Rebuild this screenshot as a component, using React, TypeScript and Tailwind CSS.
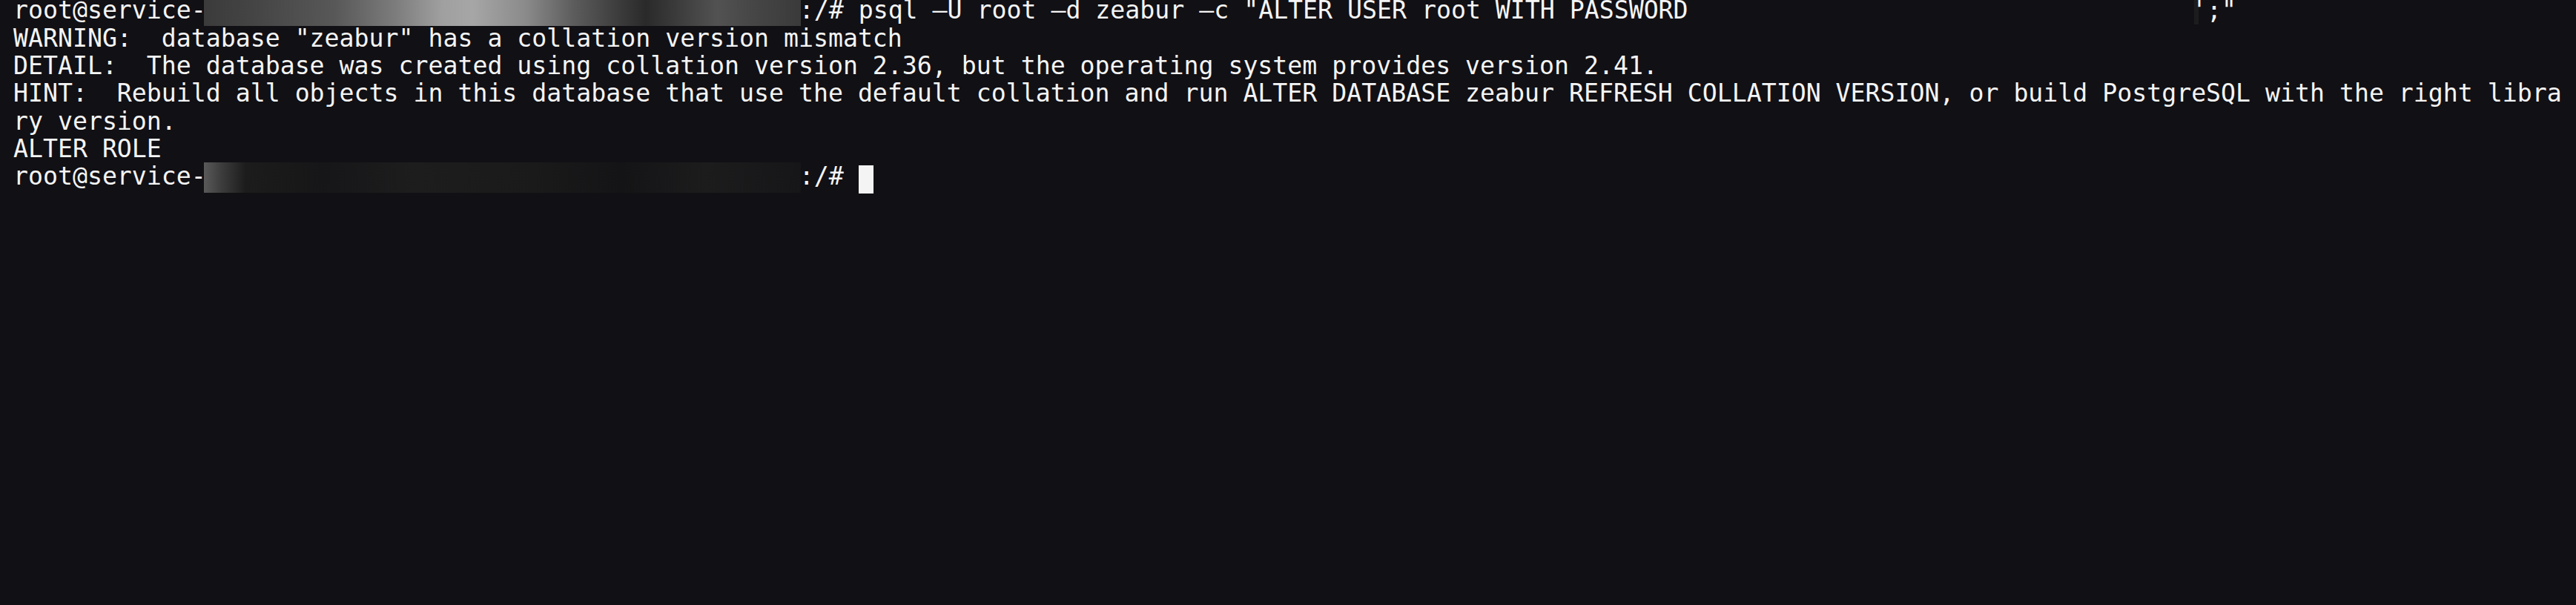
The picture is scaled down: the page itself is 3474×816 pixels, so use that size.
const HINT_A =
  'HINT:  Rebuild all objects in this database that use the default collation and run ALTER DATABASE zeabur REFRESH COLLATION VERSION, or build PostgreSQL with the right libra';
const HINT_B = 'ry version.';

function Line({ children }: { children?: React.ReactNode }) {
  return <div className="h-[37.3px] whitespace-pre">{children}</div>;
}

export default function App() {
  return (
    <div className="h-[816px] w-full overflow-hidden bg-[#111014] text-[#f4f4f4]">
      <div className="pl-[18px] font-['DejaVu_Sans_Mono','Liberation_Mono',monospace] text-[33.2px] leading-[37.3px]">
        {/* first row is cut by the screenshot, so it sits a little higher */}
        <div className="flex h-[32.9px] items-start whitespace-pre leading-[28.4px]">
          <span>root@service-</span>
          <span className="-ml-[3px] -mr-[2px] inline-block h-[35px] w-[805px] bg-[linear-gradient(90deg,#3b3b3b_0%,#444444_8%,#585858_22%,#7c7c7c_32%,#a0a0a0_40%,#a6a6a6_45%,#8a8a8a_54%,#5c5c5c_62%,#3a3a3a_70%,#2a2a2a_74%,#3e3e3e_80%,#525252_86%,#464646_92%,#3a3a3a_100%)]" />
          <span>{':/# psql –U root –d zeabur –c "ALTER USER root WITH PASSWORD ' + ' '.repeat(33)}</span>
          <span className="inline-block h-[33px] w-[20px] bg-[linear-gradient(90deg,transparent_3px,#1c1c1f_3px,#1c1c1f_9px,transparent_9px)]">
            '
          </span>
          <span>{';"'}</span>
        </div>
        <Line>WARNING:  database "zeabur" has a collation version mismatch</Line>
        <Line>
          DETAIL:  The database was created using collation version 2.36, but the operating system provides
          version 2.41.
        </Line>
        <Line>{HINT_A}</Line>
        <Line>{HINT_B}</Line>
        <Line>ALTER ROLE</Line>
        <Line>
          <div className="flex items-start">
            <span>root@service-</span>
            <span className="-ml-[3px] -mr-[2px] inline-block h-[41px] w-[805px] bg-[linear-gradient(90deg,#5a5a5a_0%,#3c3c3c_3%,#1c1c1c_7%,#161618_20%,#1d1d1e_35%,#1a1a1b_55%,#141416_70%,#1c1c1d_84%,#161618_100%)]" />
            <span>{':/# '}</span>
            <span className="mt-[3.6px] inline-block h-[38px] w-[20px] bg-[#f4f4f4]" />
          </div>
        </Line>
      </div>
    </div>
  );
}
